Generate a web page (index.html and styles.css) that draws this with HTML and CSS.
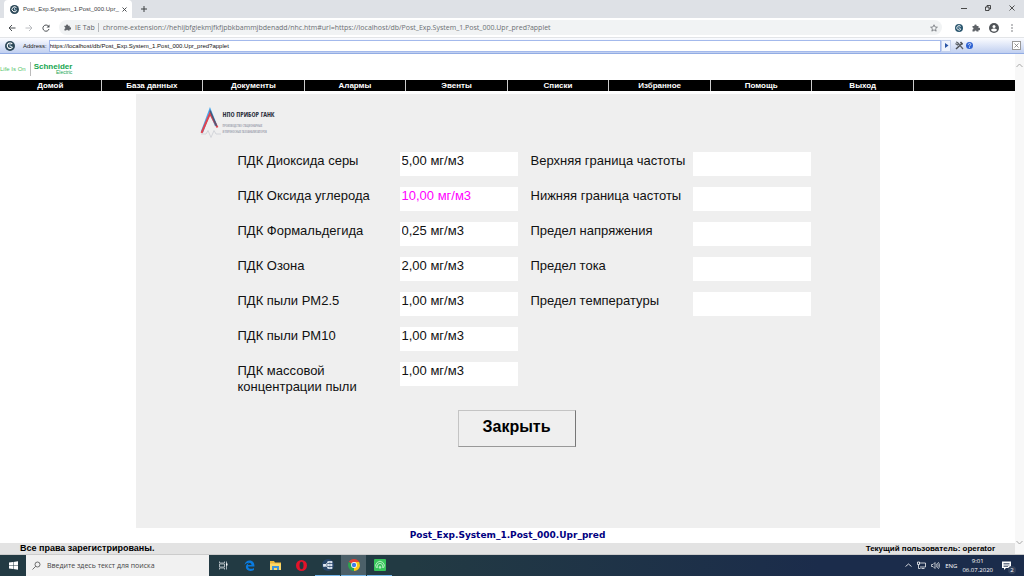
FILE: index.html
```
<!DOCTYPE html>
<html lang="ru">
<head>
    <meta charset="UTF-8">
    <meta name="viewport" content="width=device-width, initial-scale=1.0">
    <title>Post_Exp.System_1.Post_000.Upr_pred</title>
    <link rel="stylesheet" href="styles.css">
</head>
<body>
    <!-- Browser window -->
    <div class="tab-strip">
        <div class="tab">
            <svg class="icon-9" viewBox="0 0 18 18"><circle cx="9" cy="9" r="9" fill="#2c4858"/><path d="M13 5.500A5 5 0 1 0 13.500 11" fill="none" stroke="#fff" stroke-width="2"/><path d="M9 5v5h4" fill="none" stroke="#b9d2e2" stroke-width="1.800"/></svg>
            <span class="tab-title">Post_Exp.System_1.Post_000.Upr_</span>
            <button type="button" class="plain" aria-label="Закрыть вкладку"><svg class="icon-5" viewBox="0 0 10 10"><path d="M1 1l8 8M9 1l-8 8" stroke="#3c4043" stroke-width="1.800"/></svg></button>
        </div>
        <button type="button" class="plain new-tab" aria-label="Новая вкладка"><svg class="icon-6" viewBox="0 0 12 12"><path d="M6 0v12M0 6h12" stroke="#3c4043" stroke-width="2"/></svg></button>
        <div class="window-buttons">
            <button type="button" class="plain" aria-label="Свернуть"><svg class="icon-6" viewBox="0 0 12 12"><path d="M0 7h12" stroke="#222" stroke-width="1.600"/></svg></button>
            <button type="button" class="plain" aria-label="Развернуть"><svg class="icon-6" viewBox="0 0 12 12"><path d="M1 4h7v7H1zM4 4V1h7v7H8" fill="none" stroke="#222" stroke-width="1.600"/></svg></button>
            <button type="button" class="plain" aria-label="Закрыть окно"><svg class="icon-6" viewBox="0 0 12 12"><path d="M1 1l10 10M11 1L1 11" stroke="#222" stroke-width="1.500"/></svg></button>
        </div>
    </div>
    <div class="toolbar">
        <button type="button" class="plain" aria-label="Назад"><svg class="icon-8" viewBox="0 0 16 16"><path d="M15 8H2M8 2L2 8l6 6" fill="none" stroke="#4a4e52" stroke-width="2"/></svg></button>
        <button type="button" class="plain" aria-label="Вперёд"><svg class="icon-8" viewBox="0 0 16 16"><path d="M1 8h13M8 2l6 6-6 6" fill="none" stroke="#b4b7bb" stroke-width="1.800"/></svg></button>
        <button type="button" class="plain" aria-label="Обновить"><svg class="icon-8" viewBox="0 0 16 16"><path d="M13 4.500A6.200 6.200 0 1 0 14 10" fill="none" stroke="#4a4e52" stroke-width="2"/><path d="M15 1v6H9z" fill="#4a4e52"/></svg></button>
        <div class="omnibox">
            <svg class="icon-7" viewBox="0 0 16 16"><path d="M1 4h4a2.200 2.200 0 1 1 4 0h4v4a2.200 2.200 0 1 1 0 4v3H9a2 2 0 1 0-4 0H1v-4a2 2 0 1 0 0-4z" fill="#5f6368"/></svg>
            <label for="pageUrl">IE Tab</label>
            <input type="text" id="pageUrl" value="chrome-extension://hehijbfgiekmjfkfjpbkbammjbdenadd/nhc.htm#url=https://localhost/db/Post_Exp.System_1.Post_000.Upr_pred?applet">
            <svg class="icon-8" viewBox="0 0 16 16"><path d="M8 1.500l2 4.500 4.800.4-3.700 3.100 1.200 4.800L8 11.700l-4.300 2.600 1.200-4.800L1.200 6.400 6 6z" fill="none" stroke="#5f6368" stroke-width="1.400"/></svg>
        </div>
        <svg class="icon-8" viewBox="0 0 18 18"><circle cx="9" cy="9" r="9" fill="#2c5870"/><path d="M13 5.500A5 5 0 1 0 13.500 11" fill="none" stroke="#fff" stroke-width="2"/><path d="M9 5v5h4" fill="none" stroke="#b9d2e2" stroke-width="1.800"/></svg>
        <svg class="icon-8" viewBox="0 0 16 16"><path d="M1 4h4a2.200 2.200 0 1 1 4 0h4v4a2.200 2.200 0 1 1 0 4v3H9a2 2 0 1 0-4 0H1v-4a2 2 0 1 0 0-4z" fill="#5f6368"/></svg>
        <svg class="icon-10" viewBox="0 0 20 20"><circle cx="10" cy="10" r="10" fill="#505458"/><circle cx="10" cy="7" r="3" fill="#fff"/><path d="M4 14c1-4 11-4 12 0-3 4-9 4-12 0z" fill="#fff"/></svg>
        <svg class="icon-8" viewBox="0 0 16 16"><g fill="#5f6368"><circle cx="8" cy="2" r="1.500"/><circle cx="8" cy="8" r="1.500"/><circle cx="8" cy="14" r="1.500"/></g></svg>
    </div>
    <div class="ie-bar">
        <svg class="icon-10" viewBox="0 0 18 18"><circle cx="9" cy="9" r="9" fill="#2c4858"/><path d="M13 5.500A5 5 0 1 0 13.500 11" fill="none" stroke="#fff" stroke-width="2"/><path d="M9 5v5h4" fill="none" stroke="#b9d2e2" stroke-width="1.800"/></svg>
        <label for="ieUrl">Address:</label>
        <input type="text" id="ieUrl" value="https://localhost/db/Post_Exp.System_1.Post_000.Upr_pred?applet">
        <button type="button" class="go" aria-label="Перейти"><svg class="icon-5" viewBox="0 0 10 10"><path d="M2 0l7 5-7 5z" fill="#2a55a5"/></svg></button>
        <svg class="icon-9" viewBox="0 0 18 18"><path d="M2 16L15 4M11 2l4 5" stroke="#4c5055" stroke-width="3"/><path d="M2 2l3 1 11 13M1 5l4 3 3-4" fill="none" stroke="#5d6268" stroke-width="2.400"/></svg>
        <svg class="icon-7" viewBox="0 0 14 14"><circle cx="7" cy="7" r="7" fill="#2f63d2"/><path d="M4.500 5.500c0-3.500 5-3.500 5-.5 0 2-2.500 1.800-2.500 4M7 10.500v1.500" fill="none" stroke="#fff" stroke-width="1.600"/></svg>
        <button type="button" class="bar-close" aria-label="Закрыть панель"><svg class="icon-5" viewBox="0 0 10 10"><path d="M1 1l8 8M9 1l-8 8" stroke="#777" stroke-width="1.600"/></svg></button>
    </div>

    <div class="viewport">
        <div class="page">
            <header>
                <span class="life">Life Is On</span>
                <span class="brand">Schneider<small>Electric</small></span>
            </header>
            <nav>
                <a href="#">Домой</a>
                <a href="#">База данных</a>
                <a href="#">Документы</a>
                <a href="#">Алармы</a>
                <a href="#">Эвенты</a>
                <a href="#">Списки</a>
                <a href="#">Избранное</a>
                <a href="#">Помощь</a>
                <a href="#">Выход</a>
            </nav>
            <main>
                <div class="panel">
                    <div class="company">
                        <svg class="company-mark" viewBox="0 0 44 64"><path d="M4 52L20 9l12 30" fill="none" stroke="#4aa6ea" stroke-width="5"/><path d="M3 54L20 15l15 28" fill="none" stroke="#e04450" stroke-width="4"/><path d="M20 9l13 31" stroke="#4a5975" stroke-width="3"/><path d="M2 56h10l4-7 6 14 6-14 4 7h10" fill="none" stroke="#d3d5da" stroke-width="2"/></svg>
                        <div>
                            <div class="company-name">НПО ПРИБОР ГАНК</div>
                            <div class="company-note">ПРОИЗВОДСТВО СТАЦИОНАРНЫХ<br>И ПЕРЕНОСНЫХ ГАЗОАНАЛИЗАТОРОВ</div>
                        </div>
                    </div>
                    <form>
                        <div class="limits">
                            <label for="so2">ПДК Диоксида серы</label>
                            <input type="text" id="so2" value="5,00 мг/м3">
                            <label for="co">ПДК Оксида углерода</label>
                            <input type="text" id="co" class="changed" value="10,00 мг/м3">
                            <label for="ch2o">ПДК Формальдегида</label>
                            <input type="text" id="ch2o" value="0,25 мг/м3">
                            <label for="o3">ПДК Озона</label>
                            <input type="text" id="o3" value="2,00 мг/м3">
                            <label for="pm25">ПДК пыли PM2.5</label>
                            <input type="text" id="pm25" value="1,00 мг/м3">
                            <label for="pm10">ПДК пыли PM10</label>
                            <input type="text" id="pm10" value="1,00 мг/м3">
                            <label for="dust">ПДК массовой концентрации пыли</label>
                            <input type="text" id="dust" value="1,00 мг/м3">
                        </div>
                        <div class="limits">
                            <label for="freqMax">Верхняя граница частоты</label>
                            <input type="text" id="freqMax">
                            <label for="freqMin">Нижняя граница частоты</label>
                            <input type="text" id="freqMin">
                            <label for="voltage">Предел напряжения</label>
                            <input type="text" id="voltage">
                            <label for="current">Предел тока</label>
                            <input type="text" id="current">
                            <label for="temp">Предел температуры</label>
                            <input type="text" id="temp">
                        </div>
                        <button type="button" class="close-btn">Закрыть</button>
                    </form>
                </div>
                <p class="caption">Post_Exp.System_1.Post_000.Upr_pred</p>
            </main>
            <footer>
                <span class="rights">Все права зарегистрированы.</span>
                <span>Текущий пользователь: operator</span>
            </footer>
        </div>
        <div class="scrollbar">
            <svg class="icon-7" viewBox="0 0 14 14"><path d="M1 10l6-6 6 6" fill="none" stroke="#a8a8a8" stroke-width="2"/></svg>
            <svg class="icon-7" viewBox="0 0 14 14"><path d="M1 4l6 6 6-6" fill="none" stroke="#a8a8a8" stroke-width="2"/></svg>
        </div>
    </div>

    <!-- Taskbar -->
    <div class="taskbar">
        <button type="button" class="plain start" aria-label="Пуск"><svg class="icon-9" viewBox="0 0 18 18"><path d="M0 3l8-1v6.500H0zM9 2l9-1.500v8H9zM0 9.500h8V16l-8-1zM9 9.500h9v8L9 16z" fill="#fff"/></svg></button>
        <div class="search">
            <svg class="icon-9" viewBox="0 0 18 18"><circle cx="11" cy="7" r="5" fill="none" stroke="#444" stroke-width="1.500"/><path d="M7.500 10.500L1 17" stroke="#444" stroke-width="1.500"/></svg>
            <input type="text" placeholder="Введите здесь текст для поиска" aria-label="Поиск">
        </div>
        <div class="apps">
            <button type="button" class="plain" aria-label="Представление задач"><svg class="icon-9" viewBox="0 0 18 18"><path d="M1 1v3h10V1M1 17v-3h10v3M1 6h10v6H1zM15 1v16" fill="none" stroke="#d5dce0" stroke-width="1.500"/><path d="M14 5h3v4h-3z" fill="#fff"/></svg></button>
            <button type="button" class="plain" aria-label="Edge"><svg class="icon-11" viewBox="0 0 22 22"><path d="M1 10C2 4 6 1 11 1c7 0 10 5 10 12H8c0 5 7 6 12 3v4C11 25 2 20 4 12c1-3 3-5 6-6-1 1-2 2-2 4h7c0-6-10-6-14 0z" fill="#0a7be0"/></svg></button>
            <button type="button" class="plain" aria-label="Проводник"><svg class="icon-11" viewBox="0 0 22 22"><path d="M0 2h8l2 3h12v15H0z" fill="#efb83a"/><path d="M0 7h22v13H0z" fill="#fbd768"/><path d="M4 20v-8h14v8h-4v-4H8v4z" fill="#3d94dc"/></svg></button>
            <button type="button" class="plain" aria-label="Opera"><svg class="icon-11" viewBox="0 0 22 22"><ellipse cx="11" cy="11" rx="11" ry="11" fill="#e3132a"/><ellipse cx="11" cy="11" rx="4" ry="7.500" fill="#243640"/></svg></button>
            <button type="button" class="plain running" aria-label="SCADA"><svg class="icon-12" viewBox="0 0 22 22"><circle cx="11" cy="11" r="11" fill="#28466a"/><path d="M6 11L12 5M6 11l6 6M4 11h12M12 5h6M12 17h6" stroke="#fff" stroke-width="1.500"/><path d="M2 9h5v5H2zM10 4h4v4h-4zM10 9h4v4h-4zM10 14h4v4h-4zM15 4h4v4h-4zM15 9h4v4h-4zM15 14h4v4h-4z" fill="#dfe7f2"/></svg></button>
            <button type="button" class="plain running active" aria-label="Chrome"><svg class="icon-12" viewBox="0 0 22 22"><path d="M11 11L1.500 5.500a11 11 0 0 1 19 0z" fill="#e34133"/><path d="M11 11L1.500 5.500A11 11 0 0 0 11 22z" fill="#2da44e"/><path d="M11 11h9.500v-5.500A11 11 0 0 1 11 22z" fill="#fbc816"/><path d="M11 5.500h9.500L20 11h-9z" fill="#fbc816"/><circle cx="11" cy="11" r="5.300" fill="#fff"/><circle cx="11" cy="11" r="4" fill="#3f7de8"/></svg></button>
            <button type="button" class="plain running" aria-label="Монитор"><svg class="icon-12" viewBox="0 0 24 24"><rect width="24" height="24" rx="2" fill="#36c45a"/><path d="M5 18a8.500 8.500 0 1 1 14 0M8 18a5.500 5.500 0 1 1 8 0M11 19v-4a1 1 0 0 1 2 0v4" fill="none" stroke="#c9f3d2" stroke-width="1.700"/></svg></button>
        </div>
        <div class="tray">
            <svg class="icon-7" viewBox="0 0 14 14"><path d="M1 9l6-5 6 5" fill="none" stroke="#fff" stroke-width="1.600"/></svg>
            <svg class="icon-9" viewBox="0 0 18 18"><path d="M4 4h13v8H6M9 15h6M1 2h4v5H1zM3 7v8h4" fill="none" stroke="#fff" stroke-width="1.500"/></svg>
            <svg class="icon-9" viewBox="0 0 18 18"><path d="M1 7h3l4-4v12l-4-4H1zM10 6c2 2 2 4 0 6M12 4c3 3 3 7 0 10M14 2c4 4 4 10 0 14" fill="none" stroke="#fff" stroke-width="1.300"/></svg>
            <span>ENG</span>
            <span class="clock">9:01<br>06.07.2020</span>
            <div class="notes">
                <svg class="icon-10" viewBox="0 0 20 20"><path d="M0 1h18v13H8l-4 4v-4H0z" fill="#fff"/><path d="M3 5h12M3 8h12M3 11h9" stroke="#1b2c4b" stroke-width="1.300"/></svg>
                <span class="badge">2</span>
            </div>
        </div>
    </div>
</body>
</html>
```
FILE: styles.css
```
* {
    box-sizing: border-box;
}
body {
    margin: 0;
    min-height: 100vh;
    display: flex;
    flex-direction: column;
    background-color: #fff;
    font-family: "Liberation Sans", Arial, sans-serif;
}
svg {
    display: block;
    flex: none;
}
input, button {
    font-family: inherit;
    margin: 0;
    min-width: 0;
}
.plain {
    display: flex;
    align-items: center;
    justify-content: center;
    padding: 0;
    border: none;
    background: none;
}
.icon-5 { width: 5px; height: 5px; }
.icon-6 { width: 6px; height: 6px; }
.icon-7 { width: 7px; height: 7px; }
.icon-8 { width: 8px; height: 8px; }
.icon-9 { width: 9px; height: 9px; }
.icon-10 { width: 10px; height: 10px; }
.icon-11 { width: 11px; height: 11px; }
.icon-12 { width: 12px; height: 12px; }

/* browser */
.tab-strip {
    display: flex;
    align-items: center;
    height: 18px;
    background-color: #dee1e6;
    font-family: "Open Sans", sans-serif;
}
.tab {
    display: flex;
    align-items: center;
    align-self: stretch;
    gap: 4px;
    width: 128px;
    margin-left: 4px;
    padding: 0 6px;
    border-radius: 4px 4px 0 0;
    background-color: #fff;
}
.tab-title {
    flex: 1;
    white-space: nowrap;
    font-family: "Liberation Sans", sans-serif;
    font-size: 6px;
    line-height: 12px;
    color: #3c4043;
}
.new-tab {
    margin-left: 9px;
}
.window-buttons {
    display: flex;
    gap: 18px;
    margin-left: auto;
    padding: 0 9px 2px 0;
}
.toolbar {
    display: flex;
    align-items: center;
    gap: 9px;
    height: 20px;
    padding: 0 8px;
    border-bottom: 1px solid #e3e5e8;
}
.omnibox {
    flex: 1;
    display: flex;
    align-items: center;
    gap: 4px;
    height: 15px;
    margin-right: 4px;
    padding: 0 0 0 5px;
    border-radius: 8px;
    background-color: #f1f3f4;
    font-family: "Open Sans", sans-serif;
    font-size: 7px;
    color: #5f6368;
}
.omnibox .icon-8 {
    margin-right: 4px;
}
.omnibox label {
    padding-right: 3px;
    border-right: 1px solid #b5b8bc;
    line-height: 9px;
}
.omnibox input {
    flex: 1;
    height: 13px;
    padding: 0;
    border: none;
    background: none;
    font-size: 7px;
    color: #6b6f73;
}
.ie-bar {
    display: flex;
    align-items: center;
    height: 16px;
    padding: 0 3px 0 5px;
    border-bottom: 1px solid #92ace4;
    background: linear-gradient(#fbfcff, #c0cff0);
}
.ie-bar label {
    margin: 0 2px 0 8px;
    font-size: 6px;
    color: #222;
}
.ie-bar input {
    flex: 1;
    height: 12px;
    padding: 0;
    border: 1px solid #a3b9ec;
    font-size: 6px;
    color: #111;
}
.go {
    display: flex;
    align-items: center;
    justify-content: center;
    width: 10px;
    height: 12px;
    margin-right: 4px;
    padding: 0;
    border: 1px solid #c3d0ec;
    background-color: #eef3fd;
}
.ie-bar .icon-7 {
    margin-left: 2px;
}
.bar-close {
    display: flex;
    align-items: center;
    justify-content: center;
    width: 9px;
    height: 9px;
    margin-left: 39px;
    padding: 0;
    border: 1px solid #999;
    background-color: #fff;
}

/* page */
.viewport {
    flex: 1;
    display: flex;
}
.page {
    flex: 1;
    display: flex;
    flex-direction: column;
}
.scrollbar {
    display: flex;
    flex-direction: column;
    align-items: center;
    justify-content: space-between;
    width: 9px;
    padding: 8px 0;
    background-color: #f8f8f8;
}
header {
    display: flex;
    align-items: center;
    height: 26px;
    padding-top: 3px;
}
.life {
    padding-right: 4px;
    border-right: 1px solid #bbb;
    font-size: 6px;
    line-height: 14px;
    color: #52c46a;
}
.brand {
    display: flex;
    flex-direction: column;
    padding-left: 3px;
    font-size: 8px;
    line-height: 7px;
    font-weight: bold;
    color: #16a650;
}
.brand small {
    align-self: flex-end;
    font-size: 5px;
    line-height: 4px;
    font-weight: normal;
}
nav {
    display: grid;
    grid-template-columns: repeat(9, 1fr) 101px;
    height: 11px;
    background-color: #000;
}
nav a {
    border-right: 1px solid #ccc;
    font-size: 8px;
    line-height: 11px;
    font-weight: bold;
    text-align: center;
    text-decoration: none;
    color: #fff;
}
main {
    flex: 1;
    display: flex;
    flex-direction: column;
    align-items: center;
    padding-top: 3px;
}
.panel {
    flex: 1;
    width: 100%;
    max-width: 744px;
    padding: 12px 0 80px 64px;
    background-color: #efefef;
}
.company {
    display: flex;
    height: 34px;
}
.company-mark {
    width: 22px;
    height: 32px;
    margin-right: 1px;
}
.company-name {
    font-family: "Liberation Sans Narrow", "Open Sans Condensed", "Liberation Sans", sans-serif;
    font-size: 7px;
    line-height: 17px;
    font-weight: bold;
    white-space: nowrap;
    color: #2b2f3c;
}
.company-note {
    font-family: "Open Sans Condensed", "Roboto Condensed", "Liberation Sans Narrow", "Liberation Sans", sans-serif;
    font-size: 3px;
    line-height: 6px;
    white-space: nowrap;
    color: #a3a6b2;
}
form {
    display: grid;
    grid-template-columns: 280px 280px;
    column-gap: 13px;
    align-items: start;
    padding: 12px 0 0 38px;
}
.limits {
    display: grid;
    grid-template-columns: 1fr 118px;
    grid-auto-rows: 24px;
    row-gap: 11px;
}
.limits label {
    padding-top: 1px;
    font-size: 13px;
    line-height: 16px;
    color: #111;
}
.limits input {
    width: 118px;
    height: 24px;
    padding: 0 2px 7px;
    border: none;
    background-color: #fff;
    font-size: 13px;
    color: #111;
}
.limits .changed {
    color: #f0f;
}
.close-btn {
    width: 118px;
    height: 37px;
    margin: 24px 0 0 220px;
    padding: 0 0 3px;
    border: 1px solid;
    border-color: #c4c4c4 #777 #999 #c4c4c4;
    background-color: #efefef;
    font-size: 16px;
    font-weight: bold;
    color: #000;
}
.caption {
    margin: 0;
    font-family: "DejaVu Sans", Verdana, sans-serif;
    font-size: 9px;
    line-height: 15px;
    font-weight: bold;
    color: #000080;
}
footer {
    display: flex;
    justify-content: space-between;
    padding: 0 20px;
    background-color: #e3e3e3;
    font-size: 8px;
    line-height: 11px;
    font-weight: bold;
    color: #000;
}
.rights {
    font-size: 9px;
}

/* taskbar */
.taskbar {
    display: flex;
    align-items: stretch;
    height: 22px;
    border-top: 1px solid #ccc;
    background: linear-gradient(to right, #223a43 40%, #1b2c4b 80%);
    font-family: "Open Sans", sans-serif;
    color: #fff;
}
.start {
    width: 26px;
}
.search {
    display: flex;
    align-items: center;
    gap: 6px;
    width: 183px;
    padding-left: 6px;
    background-color: #f1f1f1;
}
.search input {
    flex: 1;
    padding: 0;
    border: none;
    background: none;
    font-size: 7px;
}
.search input::placeholder {
    color: #444;
}
.apps {
    display: flex;
    gap: 1px;
    padding-left: 2px;
}
.apps button {
    width: 25px;
}
.running {
    border-bottom: 1px solid #76b9ed;
}
.active {
    background-color: #4c6069;
}
.tray {
    display: flex;
    align-items: center;
    gap: 5px;
    margin-left: auto;
    padding-right: 12px;
    font-size: 6px;
}
.clock {
    line-height: 9px;
    text-align: center;
}
.notes {
    position: relative;
    margin-left: 4px;
}
.badge {
    position: absolute;
    right: -4px;
    bottom: -3px;
    width: 8px;
    height: 8px;
    border-radius: 50%;
    background-color: #33425c;
    font-size: 6px;
    line-height: 8px;
    text-align: center;
}
```
